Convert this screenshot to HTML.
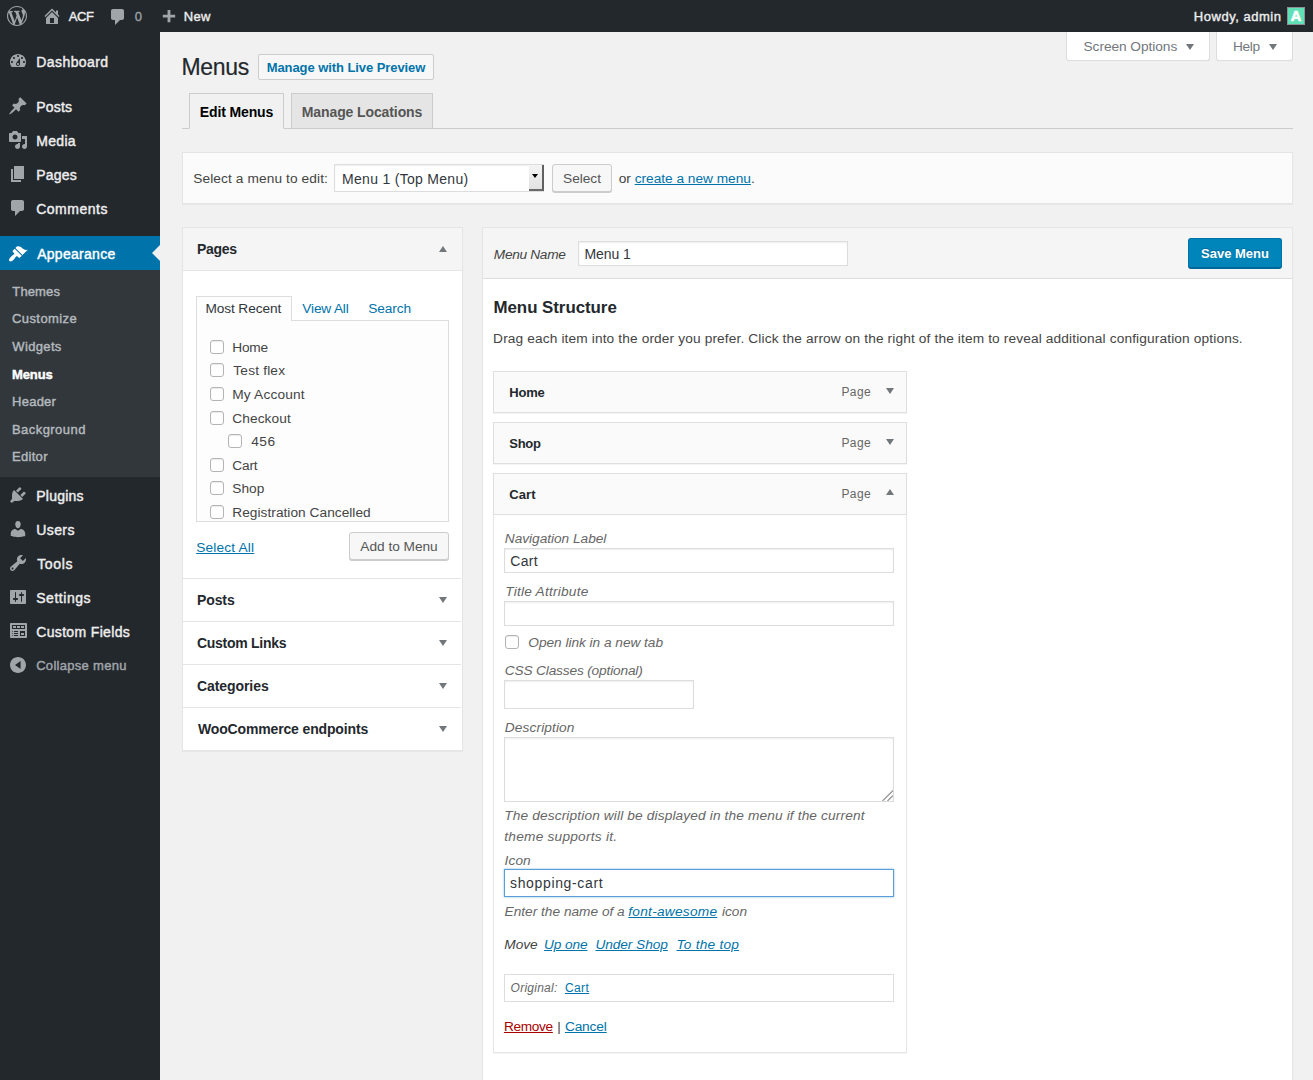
<!DOCTYPE html>
<html><head>
<meta charset="utf-8">
<title>Menus</title>
<style>
*{box-sizing:border-box;margin:0;padding:0}
html,body{width:1313px;height:1080px;overflow:hidden}
body{background:#f1f1f1;font-family:"Liberation Sans",sans-serif;font-size:13px;color:#444;position:relative}
.a{position:absolute;white-space:nowrap}
a{color:#0073aa;text-decoration:underline}
svg{display:block}
/* admin bar */
#bar{left:0;top:0;width:1313px;height:32px;background:#23282d}
#bar .t{color:#eee;font-size:13px;line-height:32px;top:1px;-webkit-text-stroke:.38px #eee}
#bar svg{fill:#a0a5aa;position:absolute}
/* sidebar */
#side{left:0;top:32px;width:160px;height:1048px;background:#23282d}
.mi{left:0;width:160px;height:34px;color:#eee;font-size:14px;line-height:34px;padding-left:36px;letter-spacing:.3px;-webkit-text-stroke:.42px}
.mi svg{position:absolute;left:8px;top:6px;width:20px;height:20px;fill:#a0a5aa}
.mi.cur{background:#0073aa;color:#fff;line-height:36px}
.mi.cur svg{fill:#fff;top:8px}
#sub{left:0;top:238px;width:160px;height:207px;background:#32373c}
.si{left:12px;color:#b4b9be;font-size:13px;line-height:16px;letter-spacing:.3px;-webkit-text-stroke:.42px;margin-top:1px}
/* content */
.btn{background:#f7f7f7;border:1px solid #ccc;border-radius:3px;box-shadow:0 1px 0 #ccc;color:#555;font-size:13px;text-align:center}
.box{background:#fff;border:1px solid #e5e5e5;box-shadow:0 1px 1px rgba(0,0,0,.04)}
.inp{background:#fff;border:1px solid #ddd;box-shadow:inset 0 1px 2px rgba(0,0,0,.07)}
.cb{width:14px;height:14px;border:1px solid #b4b4b4;border-radius:3px;background:#fff;box-shadow:inset 0 1px 1px rgba(0,0,0,.08)}
.it{font-style:italic}
.r13{font-size:13.7px;letter-spacing:.15px}
.r14{font-size:14px;letter-spacing:.25px}
.r12{font-size:12px;letter-spacing:.1px}
.b13{font-size:13px;font-weight:bold;letter-spacing:-.1px;color:#23282d}
.b14{font-size:14px;font-weight:bold;letter-spacing:-.15px;color:#23282d}
.lh{line-height:20px}
.so{background:#fff;border:1px solid #ddd;border-top:0;border-radius:0 0 3px 3px;color:#72777c;line-height:28px;box-shadow:0 1px 1px -1px rgba(0,0,0,.1)}
.dn{width:0;height:0;border:4px solid transparent;border-top:6.500px solid #72777c;border-bottom:0}
.dn2{width:0;height:0;border:4px solid transparent;border-top:6px solid #72777c;border-bottom:0}
.up{width:0;height:0;border:4px solid transparent;border-bottom:6.500px solid #72777c;border-top:0}
.tab{border:1px solid #ccc;font-size:14px;font-weight:bold;line-height:34px;padding-top:1px;text-align:center;letter-spacing:-.15px}
.sec{left:183px;width:278px;height:43px;background:#fff;border-top:1px solid #e5e5e5}

</style>
</head>
<body>
<!-- ADMIN BAR -->
<div id="bar" class="a">
<svg id="wplogo" viewBox="0 0 20 20" style="left:7px;top:6px;width:20px;height:20px"><path d="M20 10c0-5.51-4.49-10-10-10C4.48 0 0 4.49 0 10c0 5.52 4.48 10 10 10 5.51 0 10-4.48 10-10zM7.78 15.37L4.37 6.22c.55-.02 1.17-.08 1.17-.08.5-.06.44-1.13-.06-1.11 0 0-1.45.11-2.37.11-.18 0-.37 0-.58-.01C4.12 2.69 6.87 1.11 10 1.11c2.33 0 4.45.87 6.05 2.34-.68-.11-1.65.39-1.65 1.58 0 .74.45 1.36.9 2.1.35.61.55 1.36.55 2.46 0 1.49-1.4 5-1.4 5l-3.03-8.37c.54-.02.82-.17.82-.17.5-.05.44-1.25-.06-1.22 0 0-1.44.12-2.38.12-.87 0-2.33-.12-2.33-.12-.5-.03-.56 1.2-.06 1.22l.92.08 1.26 3.41zM17.41 10c.24-.64.74-1.87.43-4.25.7 1.29 1.05 2.71 1.05 4.25 0 3.29-1.73 6.24-4.4 7.78.97-2.59 1.94-5.2 2.92-7.78zM6.1 18.09C3.12 16.65 1.11 13.530 1.11 10c0-1.3.23-2.48.72-3.59C3.250 10.300 4.670 14.200 6.100 18.090zm4.030-6.630l2.580 6.980c-.86.29-1.76.45-2.71.45-.79 0-1.570-.11-2.290-.33.81-2.380 1.620-4.740 2.420-7.100z"></path></svg>
<svg viewBox="0 0 20 20" style="left:42px;top:6px;width:20px;height:20px"><path d="M16 8.5l1.530 1.530-1.060 1.060L10 4.620l-6.470 6.470-1.060-1.060L10 2.500l4 4v-2h2v4zm-6-2.460l6 5.990V18H4v-5.970zM12 17v-5H8v5h4z"></path></svg>
<div class="a t" style="left: 68.71px; letter-spacing: -0.4px;">ACF</div>
<svg viewBox="0 0 20 20" style="left:108px;top:7px;width:20px;height:20px"><path d="M5 2h9c1.100 0 2 .9 2 2v7c0 1.100-.9 2-2 2h-2l-5 5v-5H5c-1.100 0-2-.9-2-2V4c0-1.100.9-2 2-2z"></path></svg>
<div class="a t" style="left: 134.71px; color: rgb(160, 165, 170); -webkit-text-stroke: 0.3px rgb(160, 165, 170); letter-spacing: 0px;">0</div>
<svg viewBox="0 0 20 20" style="left:158.500px;top:7.500px;width:19px;height:19px"><path d="M17 7v3h-5v5H9v-5H4V7h5V2h3v5h5z"></path></svg>
<div class="a t" style="left: 183.8px; letter-spacing: 0.25px;">New</div>
<div class="a t" style="left: 1193.8px; letter-spacing: 0.527px;">Howdy, admin</div>
<div class="a" style="left: 1287px; top: 7px; width: 18px; height: 18px; background: rgb(95, 224, 182); border: 1px solid rgb(140, 145, 150); color: rgb(255, 255, 255); font-weight: bold; font-size: 14.5px; line-height: 17px; text-align: center; -webkit-text-stroke: 0.7px rgb(255, 255, 255);">A</div>
</div>
<!-- SIDEBAR -->
<div id="side" class="a">
<div class="a mi" style="top: 13px; letter-spacing: 0.412px; padding-left: 36.3px;"><svg viewBox="0 0 20 20"><path fill-rule="evenodd" d="M3.76 16h12.48c1.1-1.37 1.76-3.11 1.76-5 0-4.42-3.58-8-8-8s-8 3.58-8 8c0 1.89.66 3.63 1.76 5zM10 4c.55 0 1 .45 1 1s-.45 1-1 1-1-.45-1-1 .45-1 1-1zM6 6c.55 0 1 .45 1 1s-.45 1-1 1-1-.45-1-1 .45-1 1-1zm8 0c.55 0 1 .45 1 1s-.45 1-1 1-1-.45-1-1 .45-1 1-1zm-5.37 5.55L12 7v6c0 1.1-.9 2-2 2s-2-.9-2-2c0-.57.24-1.08.63-1.45zM4 10c.55 0 1 .45 1 1s-.45 1-1 1-1-.45-1-1 .45-1 1-1zm12 0c.55 0 1 .45 1 1s-.45 1-1 1-1-.45-1-1 .45-1 1-1zm-5 3c0-.55-.45-1-1-1s-1 .45-1 1 .45 1 1 1 1-.45 1-1z"></path></svg>Dashboard</div>
<div class="a mi" style="top: 58px; letter-spacing: 0.2px; padding-left: 36.2px;"><svg viewBox="0 0 20 20"><path fill-rule="evenodd" d="M10.44 3.02l1.82-1.82 6.36 6.35-1.83 1.82c-1.05-.68-2.48-.57-3.41.36l-.75.75c-.92.93-1.04 2.35-.35 3.41l-1.83 1.82-2.41-2.41-2.8 2.79c-.42.42-3.38 2.71-3.8 2.29s1.86-3.39 2.28-3.81l2.79-2.79L4.1 9.36l1.83-1.82c1.05.69 2.48.57 3.4-.36l.75-.75c.93-.92 1.05-2.35.36-3.41z"></path></svg>Posts</div>
<div class="a mi" style="top: 92px; letter-spacing: 0.325px; padding-left: 36.2px;"><svg viewBox="0 0 20 20"><path fill-rule="evenodd" d="M13 11V4c0-.55-.45-1-1-1h-1.67L9 1H5L3.67 3H2c-.55 0-1 .45-1 1v7c0 .55.45 1 1 1h10c.55 0 1-.45 1-1zM7 4.5c1.38 0 2.5 1.12 2.5 2.5S8.38 9.5 7 9.5 4.5 8.38 4.5 7 5.62 4.5 7 4.5zM14 6h5v10.5c0 1.38-1.12 2.5-2.5 2.5S14 17.88 14 16.5s1.12-2.5 2.5-2.5c.17 0 .34.02.5.05V9h-3V6zm-4 8.05V13h2v3.5c0 1.38-1.12 2.5-2.5 2.5S7 17.88 7 16.5 8.12 14 9.5 14c.17 0 .34.02.5.05z"></path></svg>Media</div>
<div class="a mi" style="top: 126px; letter-spacing: 0.2px; padding-left: 36.2px;"><svg viewBox="0 0 20 20"><path fill-rule="evenodd" d="M6 15V2h10v13H6zm-1 1h8v2H3V5h2v11z"></path></svg>Pages</div>
<div class="a mi" style="top: 160px; letter-spacing: 0.514px; padding-left: 36.2px;"><svg viewBox="0 0 20 20"><path fill-rule="evenodd" d="M5 2h9c1.1 0 2 .9 2 2v7c0 1.1-.9 2-2 2h-2l-5 5v-5H5c-1.1 0-2-.9-2-2V4c0-1.1.9-2 2-2z"></path></svg>Comments</div>
<div class="a mi cur" style="top: 204px; letter-spacing: 0.278px; padding-left: 37.2px;"><svg viewBox="0 0 20 20"><path fill-rule="evenodd" d="M14.48 11.06L7.41 3.99l1.5-1.5c.5-.56 2.3-.47 3.51.32 1.21.8 1.43 1.28 2.91 2.1 1.18.64 2.45 1.26 4.45.85zm-.71.71L6.7 4.7 4.93 6.47c-.39.39-.39 1.02 0 1.41l1.06 1.06c.39.39.39 1.03 0 1.42-.6.6-1.43 1.11-2.21 1.69-.35.26-.7.53-1.01.84C1.43 14.23.4 16.08 1.4 17.07c.99 1 2.84-.03 4.18-1.36.31-.31.58-.66.85-1.02.57-.78 1.08-1.61 1.69-2.21.39-.39 1.02-.39 1.41 0l1.06 1.06c.39.39 1.02.39 1.41 0z"></path></svg>Appearance</div>
<div class="a mi" style="top: 447px; letter-spacing: 0.25px; padding-left: 36.2px;"><svg viewBox="0 0 20 20"><path fill-rule="evenodd" d="M13.11 4.36L9.87 7.6 8 5.73l3.24-3.24c.35-.34 1.05-.2 1.56.32.52.51.66 1.21.31 1.55zm-8 1.77l.91-1.12 9.01 9.01-1.19.84c-.71.71-2.63 1.16-3.82 1.16H6.14L4.9 17.26c-.59.59-1.54.59-2.12 0-.59-.58-.59-1.53 0-2.12l1.24-1.24v-3.88c0-1.13.4-3.19 1.09-3.89zm7.26 3.97l3.24-3.24c.34-.35 1.04-.21 1.55.31.52.51.66 1.21.31 1.55l-3.24 3.25z"></path></svg>Plugins</div>
<div class="a mi" style="top: 481px; letter-spacing: 0.425px; padding-left: 36.2px;"><svg viewBox="0 0 20 20"><path fill-rule="evenodd" d="M10 9.25c-2.27 0-2.73-3.44-2.73-3.44C7 4.02 7.82 2 9.97 2c2.16 0 2.98 2.02 2.71 3.81 0 0-.41 3.44-2.68 3.44zm0 2.57L12.72 10c2.39 0 4.52 2.33 4.52 4.53v2.49s-3.65 1.13-7.24 1.13c-3.65 0-7.24-1.13-7.24-1.13v-2.49c0-2.25 1.94-4.48 4.47-4.48z"></path></svg>Users</div>
<div class="a mi" style="top: 515px; letter-spacing: 0.675px; padding-left: 37.2px;"><svg viewBox="0 0 20 20"><path fill-rule="evenodd" d="M16.68 9.77c-1.34 1.34-3.3 1.67-4.95.99l-5.41 6.52c-.99.99-2.59.99-3.58 0s-.99-2.59 0-3.57l6.52-5.42c-.68-1.65-.35-3.61.99-4.95 1.28-1.28 3.12-1.62 4.72-1.06l-2.89 2.89 2.82 2.82 2.86-2.87c.53 1.58.18 3.39-1.08 4.65zM3.81 16.21c.4.39 1.04.39 1.43 0 .4-.4.4-1.04 0-1.43-.39-.4-1.03-.4-1.43 0-.39.39-.39 1.03 0 1.43z"></path></svg>Tools</div>
<div class="a mi" style="top: 549px; letter-spacing: 0.543px; padding-left: 36.2px;"><svg viewBox="0 0 20 20"><path fill-rule="evenodd" d="M18 16V4c0-.55-.45-1-1-1H3c-.55 0-1 .45-1 1v12c0 .55.45 1 1 1h14c.55 0 1-.45 1-1zM8 11h1c.55 0 1 .45 1 1s-.45 1-1 1H8v1.5c0 .28-.22.5-.5.5s-.5-.22-.5-.5V13H6c-.55 0-1-.45-1-1s.45-1 1-1h1V5.5c0-.28.22-.5.5-.5s.5.22.5.5V11zm5-2h-1c-.55 0-1-.45-1-1s.45-1 1-1h1V5.500c0-.28.22-.5.5-.5s.5.22.5.5V7h1c.55 0 1 .45 1 1s-.45 1-1 1h-1v5.500c0 .28-.22.5-.5.5s-.5-.22-.5-.5V9z"></path></svg>Settings</div>
<div class="a mi" style="top: 583px; letter-spacing: 0.35px; padding-left: 36.2px;"><svg viewBox="0 0 20 20"><path fill-rule="evenodd" d="M19 16V3c0-.55-.45-1-1-1H3c-.55 0-1 .45-1 1v13c0 .55.45 1 1 1h15c.55 0 1-.45 1-1zM4 4h13v4H4V4zm1 1v2h3V5H5zm4 0v2h3V5H9zm4 0v2h3V5h-3zm-8.5 5c.28 0 .5.22.5.5s-.22.5-.5.5-.5-.22-.5-.5.22-.5.5-.5zM6 10h4v1H6v-1zm6 0h5v5h-5v-5zm-7.5 2c.28 0 .5.22.5.5s-.22.5-.5.5-.5-.22-.5-.5.22-.5.5-.5zM6 12h4v1H6v-1zm7 0v2h3v-2h-3zm-8.5 2c.28 0 .5.22.5.5s-.22.5-.5.5-.5-.22-.5-.5.22-.5.5-.5zM6 14h4v1H6v-1z"></path></svg>Custom Fields</div>
<div class="a mi" style="top: 617px; color: rgb(160, 165, 170); font-size: 13px; letter-spacing: 0.292px; padding-left: 36.2px;"><svg viewBox="0 0 20 20"><path fill-rule="evenodd" d="M10 2.020c-4.420 0-8 3.580-8 8s3.580 8 8 8 8-3.580 8-8-3.580-8-8-8zM12.600 14.100L7 10l5.600-4.100v8.200z"></path></svg>Collapse menu</div>
<div class="a" style="left:152px;top:213px;width:0;height:0;border:8px solid transparent;border-right-color:#f1f1f1;border-left-width:0"></div>
<div id="sub" class="a">
<div class="a si" style="top: 13px; letter-spacing: 0.14px; left: 12.3px;">Themes</div>
<div class="a si" style="top: 40px; letter-spacing: 0.412px; left: 12px;">Customize</div>
<div class="a si" style="top: 68px; letter-spacing: 0.35px; left: 12.3px;">Widgets</div>
<div class="a si" style="top: 96px; color: rgb(255, 255, 255); font-weight: bold; letter-spacing: -0.1px; left: 12px;">Menus</div>
<div class="a si" style="top: 123px; letter-spacing: 0.26px; left: 12px;">Header</div>
<div class="a si" style="top: 151px; letter-spacing: 0.444px; left: 12px;">Background</div>
<div class="a si" style="top: 178px; letter-spacing: 0.3px; left: 12px;">Editor</div>
</div>
</div>
<!-- CONTENT -->
<div id="content">
<!-- screen meta -->
<div class="a so" style="left:1066px;top:32px;width:144px;height:29px"><span class="a r13" style="left: 16.5px; top: 1px; letter-spacing: -0.046px;">Screen Options</span><i class="a dn2" style="left:118.500px;top:11.500px"></i></div>
<div class="a so" style="left:1216px;top:32px;width:77px;height:29px"><span class="a r13" style="left: 16px; top: 1px; letter-spacing: -0.333px;">Help</span><i class="a dn2" style="left:51.500px;top:11.500px"></i></div>
<!-- title -->
<div class="a" id="h1" style="left: 181.5px; top: 53px; font-size: 23px; line-height: 29px; color: rgb(35, 40, 45); letter-spacing: -0.325px; -webkit-text-stroke: 0.2px rgb(35, 40, 45);">Menus</div>
<div class="a" id="live" style="left: 258px; top: 54px; width: 176px; height: 26px; background: rgb(247, 247, 247); border: 1px solid rgb(204, 204, 204); border-radius: 2px; color: rgb(0, 115, 170); font-weight: bold; font-size: 13px; line-height: 24px; padding-top: 1px; text-align: center; letter-spacing: -0.074px;">Manage with Live Preview</div>
<!-- tabs -->
<div class="a" style="left:182px;top:128px;width:1111px;height:1px;background:#ccc"></div>
<div class="a tab" style="left: 189px; top: 93px; width: 95px; height: 36px; background: rgb(241, 241, 241); border-bottom-color: rgb(241, 241, 241); color: rgb(0, 0, 0); letter-spacing: -0.133px;">Edit Menus</div>
<div class="a tab" style="left: 291px; top: 93px; width: 142px; height: 36px; background: rgb(229, 229, 229); color: rgb(85, 85, 85); letter-spacing: -0.107px;">Manage Locations</div>
<!-- select bar -->
<div class="a box" style="left:182px;top:152px;width:1111px;height:52px;background:#fbfbfb"></div>
<div class="a r13 lh" style="left: 193.21px; top: 169px; letter-spacing: 0.11px;">Select a menu to edit:</div>
<div class="a inp" style="left:334px;top:164px;width:210px;height:28px"></div>
<div class="a r14 lh" style="left: 342px; top: 169px; color: rgb(50, 55, 60); letter-spacing: 0.3px;">Menu 1 (Top Menu)</div>
<div class="a" id="selarr" style="left:529px;top:165px;width:15px;height:26px;background:linear-gradient(#f4f4f4,#e2e2e2);border-right:2px solid #606060;border-bottom:2px solid #6a6a6a;border-top:0;border-left:0"><i class="a" style="left:3px;top:9px;border:3.800px solid transparent;border-top:4.500px solid #000;border-bottom:0"></i></div>
<div class="a btn r13" style="left: 552px; top: 164px; width: 60px; height: 28px; line-height: 28px; letter-spacing: -0.02px;">Select</div>
<div class="a r13 lh" style="left: 618.71px; top: 169px; letter-spacing: -0.01px;">or&nbsp;<a>create a new menu</a>.</div>
<!-- LEFT COLUMN -->
<div class="a box" style="left:182px;top:227px;width:281px;height:524px"></div>
<div class="a" style="left:183px;top:228px;width:279px;height:43px;background:#f5f5f5;border-bottom:1px solid #e5e5e5"></div>
<div class="a b14 lh" style="left: 196.91px; top: 239px; letter-spacing: -0.25px;">Pages</div>
<i class="a up" style="left:439px;top:245.500px"></i>
<!-- inner tabs -->
<div class="a" style="left:196px;top:320px;width:253px;height:202px;border:1px solid #ddd;background:#fdfdfd"></div>
<div class="a" style="left:196px;top:296px;width:96px;height:25px;border:1px solid #ddd;border-bottom:0;background:#fdfdfd"></div>
<div class="a r13 lh" style="left: 205.41px; top: 299px; color: rgb(50, 55, 60); letter-spacing: -0.1px;">Most Recent</div>
<div class="a r13 lh" style="left: 302.3px; top: 299px; color: rgb(0, 115, 170); letter-spacing: -0.171px;">View All</div>
<div class="a r13 lh" style="left: 368.3px; top: 299px; color: rgb(0, 115, 170); letter-spacing: -0.1px;">Search</div>
<div class="a cb" style="left:210px;top:340px"></div><div class="a r13 lh" style="left: 232.3px; top: 338px; letter-spacing: -0.267px;">Home</div>
<div class="a cb" style="left:210px;top:363px"></div><div class="a r13 lh" style="left: 233.3px; top: 361px; letter-spacing: 0.188px;">Test flex</div>
<div class="a cb" style="left:210px;top:387px"></div><div class="a r13 lh" style="left: 232.3px; top: 385px; letter-spacing: 0.167px;">My Account</div>
<div class="a cb" style="left:210px;top:411px"></div><div class="a r13 lh" style="left: 232.3px; top: 409px; letter-spacing: 0.086px;">Checkout</div>
<div class="a cb" style="left:228px;top:434px"></div><div class="a r13 lh" style="left: 251.3px; top: 432px; letter-spacing: 0.45px;">456</div>
<div class="a cb" style="left:210px;top:458px"></div><div class="a r13 lh" style="left: 232.3px; top: 456px; letter-spacing: -0.167px;">Cart</div>
<div class="a cb" style="left:210px;top:481px"></div><div class="a r13 lh" style="left: 232.3px; top: 479px; letter-spacing: 0.033px;">Shop</div>
<div class="a cb" style="left:210px;top:505px"></div><div class="a r13 lh" style="left: 232.3px; top: 503px; letter-spacing: 0.033px;">Registration Cancelled</div>
<div class="a r13 lh" style="left: 196.21px; top: 538px; letter-spacing: 0.178px;"><a>Select All</a></div>
<div class="a btn r13" style="left: 349px; top: 532px; width: 100px; height: 28px; line-height: 28px; letter-spacing: -0.03px;">Add to Menu</div>
<!-- closed sections -->
<div class="a sec" style="top:578px"></div><div class="a b14 lh" style="left: 196.91px; top: 590px; letter-spacing: -0.075px;">Posts</div><i class="a dn" style="left:439px;top:597px"></i>
<div class="a sec" style="top:621px"></div><div class="a b14 lh" style="left: 196.91px; top: 633px; letter-spacing: -0.273px;">Custom Links</div><i class="a dn" style="left:439px;top:640px"></i>
<div class="a sec" style="top:664px"></div><div class="a b14 lh" style="left: 196.91px; top: 676px; letter-spacing: -0.067px;">Categories</div><i class="a dn" style="left:439px;top:683px"></i>
<div class="a sec" style="top:707px"></div><div class="a b14 lh" style="left: 197.91px; top: 719px; letter-spacing: -0.145px;">WooCommerce endpoints</div><i class="a dn" style="left:439px;top:726px"></i>
<!-- RIGHT COLUMN -->
<div class="a box" style="left:482px;top:227px;width:811px;height:900px"></div>
<div class="a" style="left:483px;top:228px;width:809px;height:51px;background:#f5f5f5;border-bottom:1px solid #ddd"></div>
<div class="a r13 lh it" style="left: 493.8px; top: 245px; letter-spacing: -0.313px;">Menu Name</div>
<div class="a inp" style="left:578px;top:241px;width:270px;height:25px"></div>
<div class="a r14 lh" style="left: 584.5px; top: 244px; color: rgb(50, 55, 60); letter-spacing: -0.06px;">Menu 1</div>
<div class="a" id="save" style="left: 1188px; top: 238px; width: 94px; height: 30px; background: rgb(0, 133, 186); border-width: 1px; border-style: solid; border-color: rgb(0, 115, 170) rgb(0, 115, 170) rgb(0, 103, 153); border-image: initial; border-radius: 3px; box-shadow: rgb(0, 103, 153) 0px 1px 0px; color: rgb(255, 255, 255); font-size: 13px; font-weight: bold; line-height: 30px; text-align: center; text-shadow: rgb(0, 103, 153) 0px -1px 1px; letter-spacing: 0px;">Save Menu</div>
<div class="a" id="ms" style="left: 493.5px; top: 297px; font-size: 16.9px; font-weight: bold; line-height: 22px; color: rgb(35, 40, 45); letter-spacing: -0.046px;">Menu Structure</div>
<div class="a r13 lh" style="left: 493.11px; top: 328.5px; letter-spacing: 0.135px;">Drag each item into the order you prefer. Click the arrow on the right of the item to reveal additional configuration options.</div>
<div class="a" style="left:493px;top:371px;width:414px;height:42px;background:#fafafa;border:1px solid #dfdfdf;box-shadow:0 1px 1px rgba(0,0,0,.04)"></div>
<div class="a b13 lh" style="left: 509.3px; top: 383px; letter-spacing: -0.2px;">Home</div>
<div class="a r12 lh" style="left: 841.5px; top: 382px; color: rgb(102, 102, 102); letter-spacing: 0.367px;">Page</div>
<i class="a dn" style="left:886px;top:388px"></i>
<div class="a" style="left:493px;top:422px;width:414px;height:42px;background:#fafafa;border:1px solid #dfdfdf;box-shadow:0 1px 1px rgba(0,0,0,.04)"></div>
<div class="a b13 lh" style="left: 509.3px; top: 434px; letter-spacing: -0.267px;">Shop</div>
<div class="a r12 lh" style="left: 841.5px; top: 433px; color: rgb(102, 102, 102); letter-spacing: 0.367px;">Page</div>
<i class="a dn" style="left:886px;top:439px"></i>
<div class="a" style="left:493px;top:473px;width:414px;height:42px;background:#fafafa;border:1px solid #dfdfdf;box-shadow:0 1px 1px rgba(0,0,0,.04)"></div>
<div class="a b13 lh" style="left: 509.3px; top: 485px; letter-spacing: 0.067px;">Cart</div>
<div class="a r12 lh" style="left: 841.5px; top: 484px; color: rgb(102, 102, 102); letter-spacing: 0.367px;">Page</div>
<i class="a up" style="left:886px;top:489px"></i>
<div class="a" style="left:493px;top:515px;width:414px;height:538px;background:#fff;border:1px solid #e5e5e5;border-top:0;box-shadow:0 1px 1px rgba(0,0,0,.04)"></div>
<div class="a r13 lh it" style="left: 504.8px; top: 529px; color: rgb(102, 102, 102); letter-spacing: -0.027px;">Navigation Label</div>
<div class="a inp" style="left:504px;top:548px;width:390px;height:25px"></div>
<div class="a r14 lh" style="left: 510.21px; top: 551px; color: rgb(50, 55, 60); letter-spacing: 0.333px;">Cart</div>
<div class="a r13 lh it" style="left: 505.21px; top: 582px; color: rgb(102, 102, 102); letter-spacing: 0.221px;">Title Attribute</div>
<div class="a inp" style="left:504px;top:601px;width:390px;height:25px"></div>
<div class="a cb" style="left:505px;top:635px"></div>
<div class="a r13 lh it" style="left: 528.3px; top: 633px; color: rgb(102, 102, 102); letter-spacing: -0.033px;">Open link in a new tab</div>
<div class="a r13 lh it" style="left: 504.8px; top: 661px; color: rgb(102, 102, 102); letter-spacing: -0.167px;">CSS Classes (optional)</div>
<div class="a inp" style="left:504px;top:680px;width:190px;height:29px"></div>
<div class="a r13 lh it" style="left: 504.8px; top: 718px; color: rgb(102, 102, 102); letter-spacing: 0.12px;">Description</div>
<div class="a inp" id="ta" style="left:504px;top:737px;width:390px;height:65px"></div>
<svg class="a" style="left:881px;top:789px;width:12px;height:12px" viewBox="0 0 12 12"><path d="M12 1.500L1.500 12M12 6.500L6.500 12" stroke="#9a9a9a" stroke-width="1.300" fill="none"></path></svg>
<div class="a r13 lh it" style="left: 504.3px; top: 806px; color: rgb(102, 102, 102); letter-spacing: 0.134px;">The description will be displayed in the menu if the current</div>
<div class="a r13 lh it" style="left: 504.3px; top: 826.5px; color: rgb(102, 102, 102); letter-spacing: 0.229px;">theme supports it.</div>
<div class="a r13 lh it" style="left: 504.61px; top: 851px; color: rgb(102, 102, 102); letter-spacing: 0.067px;">Icon</div>
<div class="a" style="left:504px;top:869px;width:390px;height:28px;background:#fff;border:1px solid #5b9dd9;box-shadow:0 0 2px rgba(30,140,190,.55)"></div>
<div class="a r14 lh" style="left: 510px; top: 873px; color: rgb(50, 55, 60); letter-spacing: 0.65px;">shopping-cart</div>
<div class="a r13 lh it" style="left: 504.6px; top: 902px; color: rgb(102, 102, 102); letter-spacing: -0.006px;">Enter the name of a</div><a class="a r13 lh it" style="left: 628.3px; top: 902px; letter-spacing: 0.255px;">font-awesome</a><div class="a r13 lh it" style="left: 722.11px; top: 902px; color: rgb(102, 102, 102); letter-spacing: -0.067px;">icon</div>
<div class="a r13 lh it" style="left: 504.3px; top: 935px; color: rgb(68, 68, 68); letter-spacing: -0.067px;">Move</div><a class="a r13 lh it" style="left: 544.11px; top: 935px; letter-spacing: -0.14px;">Up one</a><a class="a r13 lh it" style="left: 595.41px; top: 935px; letter-spacing: -0.067px;">Under Shop</a><a class="a r13 lh it" style="left: 676.5px; top: 935px; letter-spacing: 0.222px;">To the top</a>
<div class="a" style="left:504px;top:974px;width:390px;height:28px;background:#fff;border:1px solid #ddd"></div>
<div class="a r12 lh it" style="left: 510.61px; top: 977.5px; color: rgb(102, 102, 102); letter-spacing: 0.25px;">Original:</div><a class="a r12 lh" style="left: 564.91px; top: 977.5px; letter-spacing: 0.4px;">Cart</a>
<a class="a r13 lh" style="left: 503.91px; top: 1017px; color: rgb(170, 0, 0); letter-spacing: -0.34px;">Remove</a><div class="a r13 lh" style="left: 557.2px; top: 1017px; letter-spacing: 0px;">|</div><a class="a r13 lh" style="left: 564.91px; top: 1017px; letter-spacing: -0.14px;">Cancel</a>
</div>


</body></html>
